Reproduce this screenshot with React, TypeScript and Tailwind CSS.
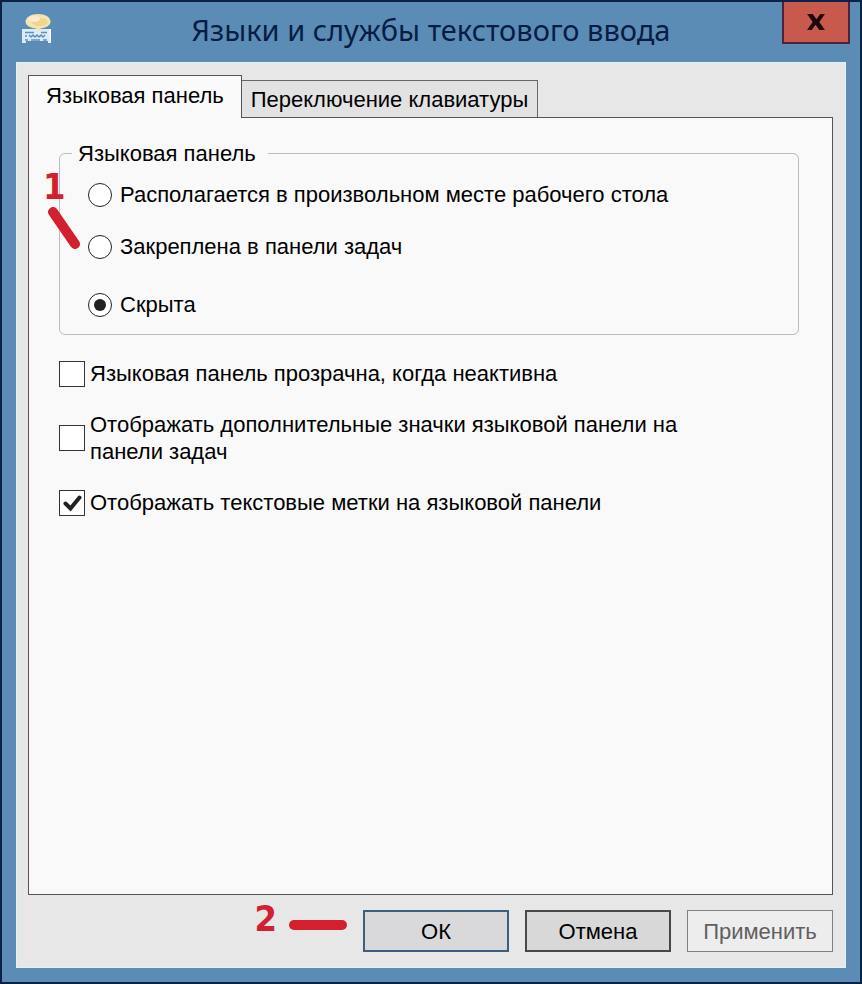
import React, { useState } from 'react';

type BarPosition = 'floating' | 'docked' | 'hidden';

interface CheckRowProps {
  id: string;
  label: string;
  checked: boolean;
  onChange: (checked: boolean) => void;
}

const positions: { value: BarPosition; label: string }[] = [
  { value: 'floating', label: 'Располагается в произвольном месте рабочего стола' },
  { value: 'docked', label: 'Закреплена в панели задач' },
  { value: 'hidden', label: 'Скрыта' },
];

const LanguageIcon: React.FC<{ className?: string }> = ({ className }) => (
  <svg viewBox="0 0 30 30" className={className} aria-hidden="true">
    <path d="M0 15h29v14h-3v-2H4v2H0z" fill="#dcebf8" />
    <path d="M3 18.500h9M19 18.500h6M3 22h2M7 21l2 2 2-2 2 2 2-2 2 2 2-2 2 2 2-2M3 26h3M9 26h9M21 26h4" stroke="#5f8fba" strokeWidth="1.5" fill="none" />
    <path d="M27 15h2v14h-1z" fill="#ffffff" />
    <path d="M16 0C23 0 28.500 3 28.500 7.500S23 14 18.500 14.500L16.500 18 14 14.500C8 14 3.500 11.500 3.500 7.500S9 0 16 0z" fill="#f3e4b0" />
    <ellipse cx="18" cy="8" rx="8" ry="4" fill="#f0d58c" />
    <ellipse cx="12" cy="5" rx="6" ry="3" fill="#f8edc6" />
  </svg>
);

const CheckRow: React.FC<CheckRowProps> = ({ id, label, checked, onChange }) => (
  <div className="flex items-center gap-1">
    <span className="relative flex size-[26px] shrink-0">
      <input
        type="checkbox"
        id={id}
        checked={checked}
        onChange={(e) => onChange(e.target.checked)}
        className="size-full appearance-none border border-[#333333] bg-white"
      />
      {checked && (
        <svg viewBox="0 0 26 26" className="pointer-events-none absolute inset-0" aria-hidden="true">
          <path d="M6.500 13.500L11.500 18.500L20.500 7.500" fill="none" stroke="#222222" strokeWidth="4" strokeLinecap="round" />
        </svg>
      )}
    </span>
    <label htmlFor={id} className="max-w-[610px] px-px">{label}</label>
  </div>
);

export default function App() {
  const [position, setPosition] = useState<BarPosition>('hidden');
  const [transparent, setTransparent] = useState(false);
  const [extraIcons, setExtraIcons] = useState(false);
  const [textLabels, setTextLabels] = useState(true);

  return (
    <div className="flex min-h-screen flex-col border-2 border-[#0b2247] bg-[#5b8cb6] px-[14px] pb-[14px] font-['Liberation_Sans',sans-serif] text-[22px] leading-[27px] text-black">
      <header className="relative flex h-[60px] items-center justify-center pb-1">
        <LanguageIcon className="absolute left-[6px] top-3 size-[30px]" />
        <h1 className="font-['Noto_Sans',sans-serif] text-[29px] leading-8 text-[#081c44]">Языки и службы текстового ввода</h1>
        <button
          type="button"
          aria-label="Закрыть"
          className="absolute -right-1 top-0 flex h-[42px] w-[68px] items-center justify-center border-2 border-t-0 border-[#4a2438] bg-[#c75a4d]"
        >
          <svg viewBox="0 0 19 17" className="h-4 w-[18px]" aria-hidden="true">
            <path d="M0 0h6l4 5.500L14 0h5l-6 8.500 6 8.500h-6l-4-5.500L5 17H0l6-8.500z" fill="#1c0808" />
          </svg>
        </button>
      </header>

      <main className="flex grow flex-col border border-[#e4f1f8] bg-[#e7e7e8] pb-[15px] pl-[11px] pr-3 pt-3">
        <div role="tablist" className="flex items-end">
          <button
            type="button"
            role="tab"
            aria-selected="true"
            className="relative z-10 -mb-px h-[43px] border border-b-0 border-[#555555] bg-[#fbfafa] px-[17px] pb-1"
          >
            Языковая панель
          </button>
          <button
            type="button"
            role="tab"
            aria-selected="false"
            className="h-[37px] border border-b-0 border-l-0 border-[#666666] bg-[#e3e2e3] px-[9px]"
          >
            Переключение клавиатуры
          </button>
        </div>

        <section className="relative flex grow flex-col border border-[#555555] bg-[#f9f9f9] px-[30px] pt-[22px]">
          <fieldset className="mr-[3px] h-[195px] rounded-md border border-[#bcbcbc] px-7">
            <legend className="-ml-4 pl-[6px] pr-3">Языковая панель</legend>
            <div className="flex flex-col pt-[14px]">
              {positions.map((p) => (
                <div key={p.value} className="mb-[25px] flex items-center gap-2 last:pt-[6px]">
                  <input
                    type="radio"
                    name="position"
                    id={p.value}
                    checked={position === p.value}
                    onChange={() => setPosition(p.value)}
                    className="flex size-6 shrink-0 appearance-none items-center justify-center rounded-full border border-[#222222] bg-white before:block before:size-3 before:rounded-full checked:before:bg-[#222222]"
                  />
                  <label htmlFor={p.value}>{p.label}</label>
                </div>
              ))}
            </div>
          </fieldset>

          <div className="flex flex-col gap-6 pt-[25px]">
            <CheckRow id="transparent" label="Языковая панель прозрачна, когда неактивна" checked={transparent} onChange={setTransparent} />
            <CheckRow id="extra-icons" label="Отображать дополнительные значки языковой панели на панели задач" checked={extraIcons} onChange={setExtraIcons} />
            <CheckRow id="text-labels" label="Отображать текстовые метки на языковой панели" checked={textLabels} onChange={setTextLabels} />
          </div>

          {/* Step marker pointing at the docked option */}
          <div className="absolute left-[14px] top-[50px] flex flex-col text-[#d3202f]">
            <span className="font-['DejaVu_Sans_Condensed','DejaVu_Sans',sans-serif] text-[36px] font-bold leading-[38px]">1</span>
            <svg viewBox="0 0 38 44" className="h-11 w-[38px]" aria-hidden="true">
              <path d="M10 6L32 38" stroke="currentColor" strokeWidth="10" strokeLinecap="round" />
            </svg>
          </div>
        </section>

        <footer className="flex items-center justify-end gap-4 pt-[15px]">
          <div className="flex items-center gap-3 text-[#d3202f]">
            <span className="pb-6 font-['DejaVu_Sans_Condensed','DejaVu_Sans',sans-serif] text-[36px] font-bold leading-[18px]">2</span>
            <svg viewBox="0 0 58 10" className="-mt-3 h-[10px] w-[58px]" aria-hidden="true">
              <path d="M5 5H53" stroke="currentColor" strokeWidth="10" strokeLinecap="round" />
            </svg>
          </div>
          <button type="button" className="h-[42px] w-[146px] border-2 border-[#3d5f7c] bg-[#d9d8da]">ОК</button>
          <button type="button" className="h-[42px] w-[146px] border-2 border-[#484848] bg-[#d9d8d9]">Отмена</button>
          <button type="button" disabled className="h-[42px] w-[146px] border border-[#808080] bg-[#eeedee] text-[#606060]">Применить</button>
        </footer>
      </main>
    </div>
  );
}
